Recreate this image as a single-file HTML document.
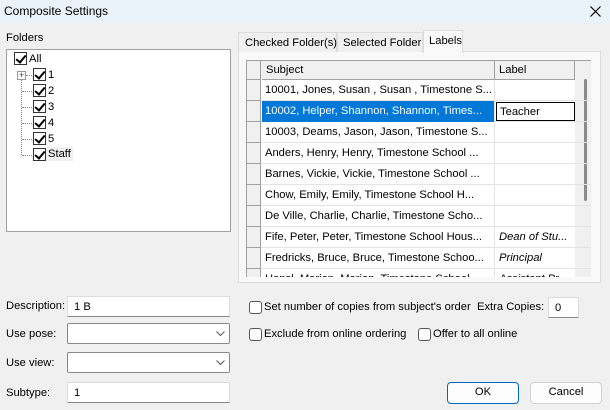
<!DOCTYPE html>
<html><head><style>
*{box-sizing:border-box;margin:0;padding:0}
body{width:610px;height:410px;background:#f0f0f0;font-family:"Liberation Sans",sans-serif;font-size:11.2px;color:#000;position:relative;overflow:hidden}
.a{position:absolute;white-space:nowrap}
.cb{position:absolute;width:13px;height:13px;border:1px solid #333;background:#fff}
.cb::after{content:"";position:absolute;left:3px;top:0px;width:4px;height:8px;border:solid #000;border-width:0 2px 2px 0;transform:rotate(40deg)}
.ucb{position:absolute;width:13px;height:13px;border:1px solid #555;border-radius:3px;background:#fff}
.inp{position:absolute;background:#fff;border:1px solid #dcdcdc;border-bottom:1px solid #888;padding:2px 6px;height:21px;line-height:16px}
.row{position:absolute;left:0;width:344px;height:21px;border-bottom:1px solid #e4e4e4}
.row .i{position:absolute;left:0;top:0;width:14px;height:21px;background:#f0f0f0;border-right:1px solid #a0a0a0;border-bottom:1px solid #a0a0a0}
.row .s{position:absolute;left:15px;top:0;width:233px;height:21px;border-right:1px solid #e4e4e4;padding:4px 3px;overflow:hidden}
.row .l{position:absolute;left:248px;top:0;width:80px;height:21px;padding:4px 4px;font-style:italic;overflow:hidden}
.dot{position:absolute;border-left:1px dotted #888}
.dh{position:absolute;border-top:1px dotted #888}
.btn{position:absolute;background:#fdfdfd;border:1px solid #d0d0d0;border-radius:4px;text-align:center;line-height:19px}
</style></head><body>
<div class="a" style="left:0;top:0;width:610px;height:23px;background:#eaf3fa"></div>
<div class="a" style="left:4px;top:4px;font-size:12px">Composite Settings</div>
<svg class="a" style="left:590px;top:6px" width="11" height="11"><path d="M0.5 0.5L10.5 10.5M10.5 0.5L0.5 10.5" stroke="#000" stroke-width="1.2"/></svg>

<div class="a" style="left:6px;top:32px">Folders</div>
<div class="a" style="left:6px;top:49px;width:225px;height:183px;background:#fff;border:1px solid #a0a0a0"></div>
<div class="cb" style="left:14px;top:52px"></div><div class="a" style="left:29px;top:53px">All</div>
<div class="a" style="left:17px;top:71px;width:9px;height:9px;border:1px solid #999;background:#fff;font-size:9px;line-height:7px;text-align:center;color:#336">+</div>
<div class="dot" style="left:21px;top:80px;height:75px"></div>
<div class="dh" style="left:26px;top:75px;width:6px"></div>
<div class="dh" style="left:22px;top:91px;width:10px"></div>
<div class="dh" style="left:22px;top:107px;width:10px"></div>
<div class="dh" style="left:22px;top:123px;width:10px"></div>
<div class="dh" style="left:22px;top:139px;width:10px"></div>
<div class="dh" style="left:22px;top:155px;width:10px"></div>
<div class="cb" style="left:33px;top:68px"></div><div class="a" style="left:48px;top:69px">1</div>
<div class="cb" style="left:33px;top:84px"></div><div class="a" style="left:48px;top:85px">2</div>
<div class="cb" style="left:33px;top:100px"></div><div class="a" style="left:48px;top:101px">3</div>
<div class="cb" style="left:33px;top:116px"></div><div class="a" style="left:48px;top:117px">4</div>
<div class="cb" style="left:33px;top:132px"></div><div class="a" style="left:48px;top:133px">5</div>
<div class="cb" style="left:33px;top:148px"></div><div class="a" style="left:46px;top:147px;padding:1px 2px;background:#f0f0f0">Staff</div>

<!-- tabs -->
<div class="a" style="left:238px;top:51px;width:363px;height:232px;background:#f9f9f9;border:1px solid #dcdcdc"></div>
<div class="a" style="left:238px;top:32px;width:99px;height:20px;border:1px solid #dcdcdc;border-bottom:none;padding:4px 6px;background:#f0f0f0">Checked Folder(s)</div>
<div class="a" style="left:337px;top:32px;width:86px;height:20px;border:1px solid #dcdcdc;border-bottom:none;padding:4px 5px;background:#f0f0f0">Selected Folder</div>
<div class="a" style="left:423px;top:30px;width:40px;height:23px;border:1px solid #dcdcdc;border-bottom:none;padding:4px 5px;background:#f9f9f9">Labels</div>

<div class="a" style="left:246px;top:60px;width:345px;height:217px;background:#f0f0f0;border-top:1px solid #a0a0a0;border-left:1px solid #a0a0a0;overflow:hidden">
 <div class="a" style="left:0;top:0;width:14px;height:19px;border-right:1px solid #a0a0a0;border-bottom:1px solid #a0a0a0"></div>
 <div class="a" style="left:15px;top:0;width:233px;height:19px;border-right:1px solid #a0a0a0;border-bottom:1px solid #a0a0a0;padding:3px 4px">Subject</div>
 <div class="a" style="left:248px;top:0;width:80px;height:19px;border-right:1px solid #a0a0a0;border-bottom:1px solid #a0a0a0;padding:3px 4px">Label</div>
 <div class="a" style="left:337px;top:18px;width:3px;height:122px;background:#8a8a8a;border-radius:2px"></div>
 <div class="a" style="left:0;top:19px;width:328px;height:200px;background:#fff">
  <div class="row" style="top:0"><div class="i"></div><div class="s">10001, Jones, Susan , Susan , Timestone S...</div><div class="l"></div></div>
  <div class="row" style="top:21px"><div class="i"></div><div class="s" style="background:#0078d7;color:#fff">10002, Helper, Shannon, Shannon, Times...</div><div class="l" style="font-style:normal;border:1px solid #000;left:249px;width:79px;top:1px;height:19px;padding:3px 3px">Teacher</div></div>
  <div class="row" style="top:42px"><div class="i"></div><div class="s">10003, Deams, Jason, Jason, Timestone S...</div><div class="l"></div></div>
  <div class="row" style="top:63px"><div class="i"></div><div class="s">Anders, Henry, Henry, Timestone School ...</div><div class="l"></div></div>
  <div class="row" style="top:84px"><div class="i"></div><div class="s">Barnes, Vickie, Vickie, Timestone School ...</div><div class="l"></div></div>
  <div class="row" style="top:105px"><div class="i"></div><div class="s">Chow, Emily, Emily, Timestone School H...</div><div class="l"></div></div>
  <div class="row" style="top:126px"><div class="i"></div><div class="s">De Ville, Charlie, Charlie, Timestone Scho...</div><div class="l"></div></div>
  <div class="row" style="top:147px"><div class="i"></div><div class="s">Fife, Peter, Peter, Timestone School Hous...</div><div class="l">Dean of Stu...</div></div>
  <div class="row" style="top:168px"><div class="i"></div><div class="s">Fredricks, Bruce, Bruce, Timestone Schoo...</div><div class="l">Principal</div></div>
  <div class="row" style="top:189px"><div class="i"></div><div class="s">Hansl, Marion, Marion, Timestone School ...</div><div class="l">Assistant Pr...</div></div>
 </div>
</div>

<!-- bottom form -->
<div class="a" style="left:6px;top:300px">Description:</div>
<div class="inp" style="left:67px;top:296px;width:163px">1 B</div>
<div class="a" style="left:6px;top:328px">Use pose:</div>
<div class="inp" style="left:67px;top:323px;width:163px;border:1px solid #888;border-radius:2px"></div>
<svg class="a" style="left:216px;top:331px" width="9" height="6"><path d="M0.5 0.5L4.5 4.5L8.5 0.5" stroke="#555" fill="none"/></svg>
<div class="a" style="left:6px;top:357px">Use view:</div>
<div class="inp" style="left:67px;top:352px;width:163px;border:1px solid #888;border-radius:2px"></div>
<svg class="a" style="left:216px;top:360px" width="9" height="6"><path d="M0.5 0.5L4.5 4.5L8.5 0.5" stroke="#555" fill="none"/></svg>
<div class="a" style="left:6px;top:387px">Subtype:</div>
<div class="inp" style="left:67px;top:382px;width:163px">1</div>

<div class="ucb" style="left:249px;top:301px"></div><div class="a" style="left:264px;top:301px">Set number of copies from subject's order</div>
<div class="a" style="left:477px;top:301px">Extra Copies:</div>
<div class="inp" style="left:548px;top:297px;width:31px">0</div>
<div class="ucb" style="left:249px;top:328px"></div><div class="a" style="left:264px;top:328px">Exclude from online ordering</div>
<div class="ucb" style="left:418px;top:328px"></div><div class="a" style="left:433px;top:328px">Offer to all online</div>

<div class="btn" style="left:447px;top:382px;width:72px;height:22px;border:1px solid #0067c0">OK</div>
<div class="btn" style="left:530px;top:382px;width:72px;height:22px">Cancel</div>
</body></html>
